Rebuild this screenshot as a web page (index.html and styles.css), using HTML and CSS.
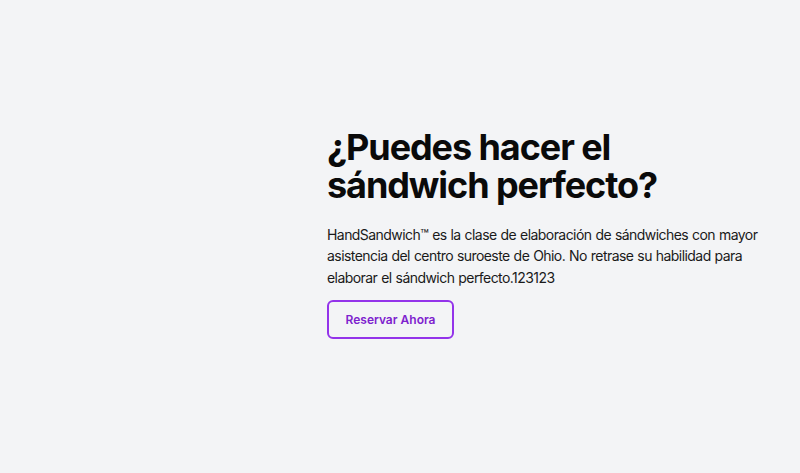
FILE: index.html
```html
<!DOCTYPE html>
<html lang="es">
<head>
<meta charset="utf-8">
<title>HandSandwich</title>
<link rel="stylesheet" href="styles.css">
</head>
<body>
<section class="hero">
  <div class="hero-media"></div>
  <div class="hero-content">
    <h1 class="hero-title">¿Puedes hacer el sándwich perfecto?</h1>
    <p class="hero-text">HandSandwich™ es la clase de elaboración de sándwiches con mayor asistencia del centro suroeste de Ohio. No retrase su habilidad para elaborar el sándwich perfecto.123123</p>
    <a class="hero-button" href="#">Reservar Ahora</a>
  </div>
</section>
</body>
</html>
```

FILE: styles.css
```css
* { box-sizing: border-box; }
html, body { margin: 0; padding: 0; }
body {
  background: #f3f4f6;
  font-family: Inter, "Noto Sans", sans-serif;
  color: #111111;
}
.hero {
  min-height: 100vh;
  display: grid;
  grid-template-columns: 327px 1fr;
  align-items: center;
  padding-bottom: 6px;
}
.hero-content {
  padding-right: 8px;
}
.hero-title {
  margin: 0;
  font-size: 36px;
  line-height: 38px;
  font-weight: 700;
  letter-spacing: -0.03em;
  color: #0a0a0a;
  max-width: 360px;
}
.hero-text {
  margin: 20px 0 0;
  font-size: 14px;
  line-height: 21.5px;
  letter-spacing: -0.04em;
  word-spacing: 0.04em;
  max-width: 455px;
  color: #1a1a1a;
}
.hero-button {
  display: inline-flex;
  align-items: center;
  justify-content: center;
  margin-top: 12px;
  width: 127px;
  height: 39px;
  border: 2px solid #9333ea;
  border-radius: 6px;
  color: #7e22ce;
  font-size: 12px;
  font-weight: 600;
  text-decoration: none;
}
```
